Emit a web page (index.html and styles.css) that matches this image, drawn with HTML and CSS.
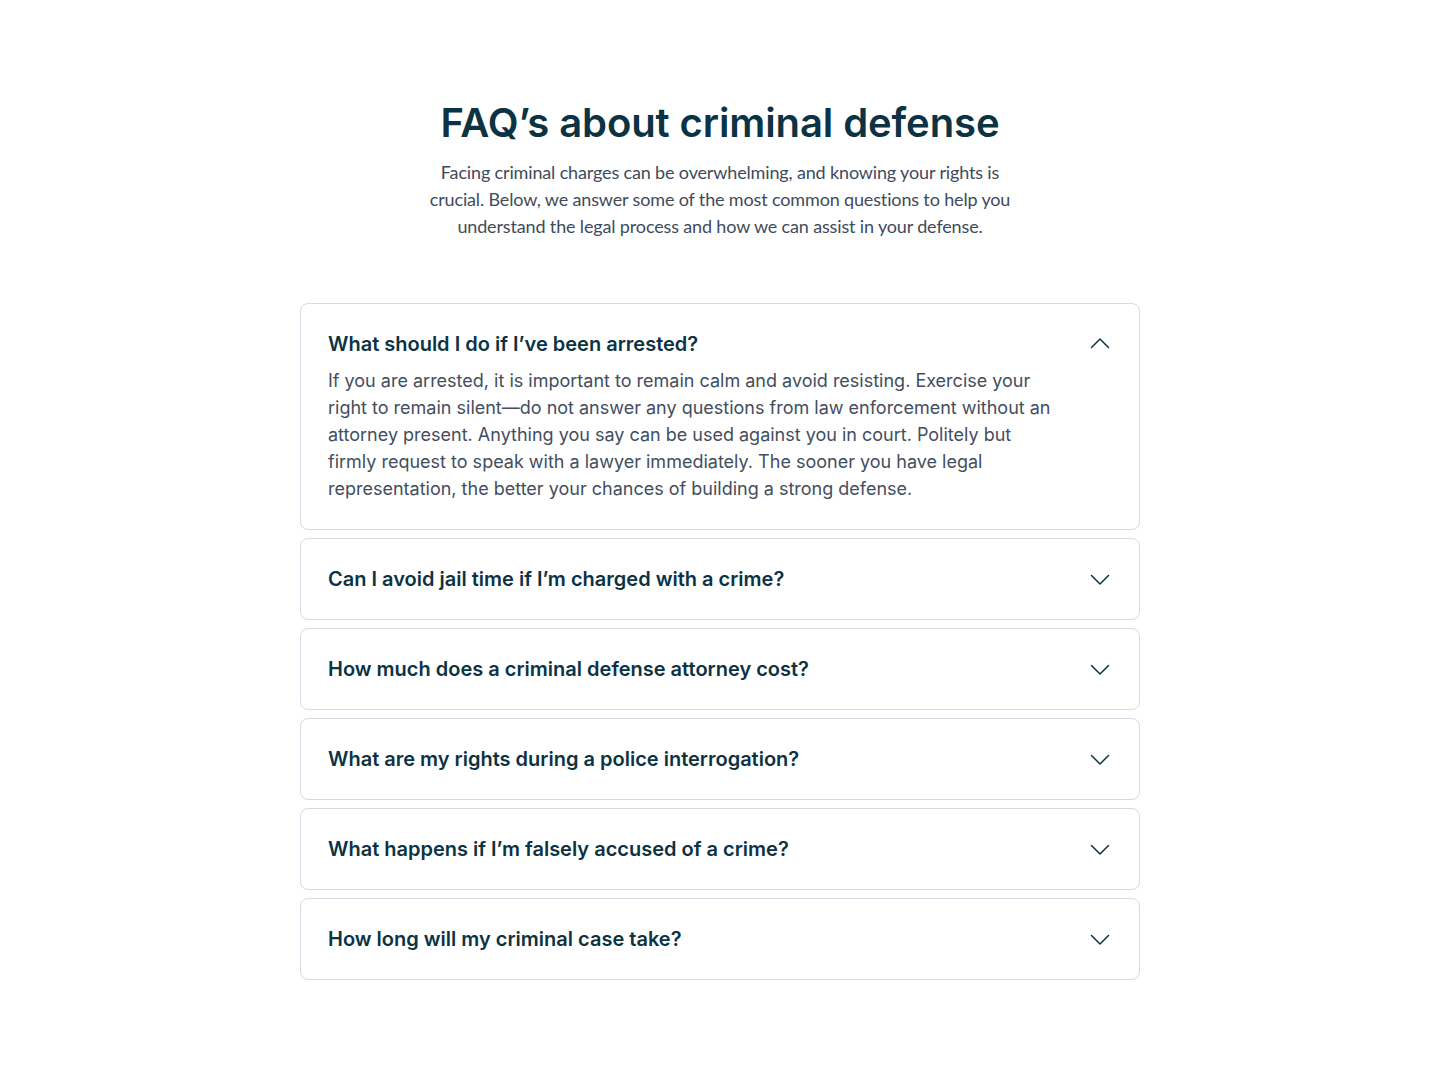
FILE: index.html
```
<!DOCTYPE html>
<html lang="en">
<head>
    <meta charset="UTF-8">
    <meta name="viewport" content="width=device-width, initial-scale=1.0">
    <title>FAQ - Criminal Defense</title>
    <link rel="stylesheet" href="styles.css">
</head>
<body>
    <section class="faq">
        <div class="faq-head">
            <h1>FAQ’s about criminal defense</h1>
            <p>Facing criminal charges can be overwhelming, and knowing your rights is crucial. Below, we answer some of the most common questions to help you understand the legal process and how we can assist in your defense.</p>
        </div>

        <div class="faq-list">
            <div class="faq-item open">
                <div class="faq-question">
                    <span>What should I do if I’ve been arrested?</span>
                    <svg class="chevron" width="24" height="24" viewBox="0 0 24 24"><path d="M3.5 15.5l8.5-8.5 8.5 8.5"/></svg>
                </div>
                <p class="faq-answer">If you are arrested, it is important to remain calm and avoid resisting. Exercise your right to remain silent—do not answer any questions from law enforcement without an attorney present. Anything you say can be used against you in court. Politely but firmly request to speak with a lawyer immediately. The sooner you have legal representation, the better your chances of building a strong defense.</p>
            </div>
            <div class="faq-item">
                <div class="faq-question">
                    <span>Can I avoid jail time if I’m charged with a crime?</span>
                    <svg class="chevron" width="24" height="24" viewBox="0 0 24 24"><path d="M3.5 8.5l8.5 8.5 8.5-8.5"/></svg>
                </div>
            </div>
            <div class="faq-item">
                <div class="faq-question">
                    <span>How much does a criminal defense attorney cost?</span>
                    <svg class="chevron" width="24" height="24" viewBox="0 0 24 24"><path d="M3.5 8.5l8.5 8.5 8.5-8.5"/></svg>
                </div>
            </div>
            <div class="faq-item">
                <div class="faq-question">
                    <span>What are my rights during a police interrogation?</span>
                    <svg class="chevron" width="24" height="24" viewBox="0 0 24 24"><path d="M3.5 8.5l8.5 8.5 8.5-8.5"/></svg>
                </div>
            </div>
            <div class="faq-item">
                <div class="faq-question">
                    <span>What happens if I’m falsely accused of a crime?</span>
                    <svg class="chevron" width="24" height="24" viewBox="0 0 24 24"><path d="M3.5 8.5l8.5 8.5 8.5-8.5"/></svg>
                </div>
            </div>
            <div class="faq-item">
                <div class="faq-question">
                    <span>How long will my criminal case take?</span>
                    <svg class="chevron" width="24" height="24" viewBox="0 0 24 24"><path d="M3.5 8.5l8.5 8.5 8.5-8.5"/></svg>
                </div>
            </div>
        </div>
    </section>
</body>
</html>
```

FILE: styles.css
```
body {
    margin: 0;
    background: #ffffff;
    font-family: Inter, "Liberation Sans", sans-serif;
    color: #0c3344;
}

.faq {
    width: 840px;
    margin: 0 auto;
    padding: 96px 0 80px;
}

.faq-head {
    text-align: center;
    margin-bottom: 63px;
}

.faq-head h1 {
    margin: 0 0 10px;
    font-size: 40px;
    line-height: 53px;
    font-weight: 600;
    letter-spacing: -0.1px;
    color: #0c3344;
}

.faq-head p {
    width: 590px;
    margin: 0 auto;
    font-family: Lato, "Open Sans", sans-serif;
    font-size: 18px;
    line-height: 27px;
    letter-spacing: -0.15px;
    color: #3f4b5c;
}

.faq-list {
    display: flex;
    flex-direction: column;
    gap: 8px;
}

.faq-item {
    border: 1px solid #d3dbe5;
    border-radius: 8px;
    padding: 28px 27px;
}

.faq-item.open {
    padding-bottom: 27px;
}

.faq-question {
    display: flex;
    justify-content: space-between;
    align-items: center;
    font-size: 20px;
    line-height: 24px;
    font-weight: 600;
    color: #0c3344;
}

.chevron {
    flex-shrink: 0;
}

.chevron path {
    fill: none;
    stroke: #0c3344;
    stroke-width: 1.5;
    stroke-linecap: round;
    stroke-linejoin: round;
}

.faq-answer {
    max-width: 735px;
    margin: 11px 0 0;
    font-size: 18px;
    line-height: 27px;
    color: #434e5e;
}
```
